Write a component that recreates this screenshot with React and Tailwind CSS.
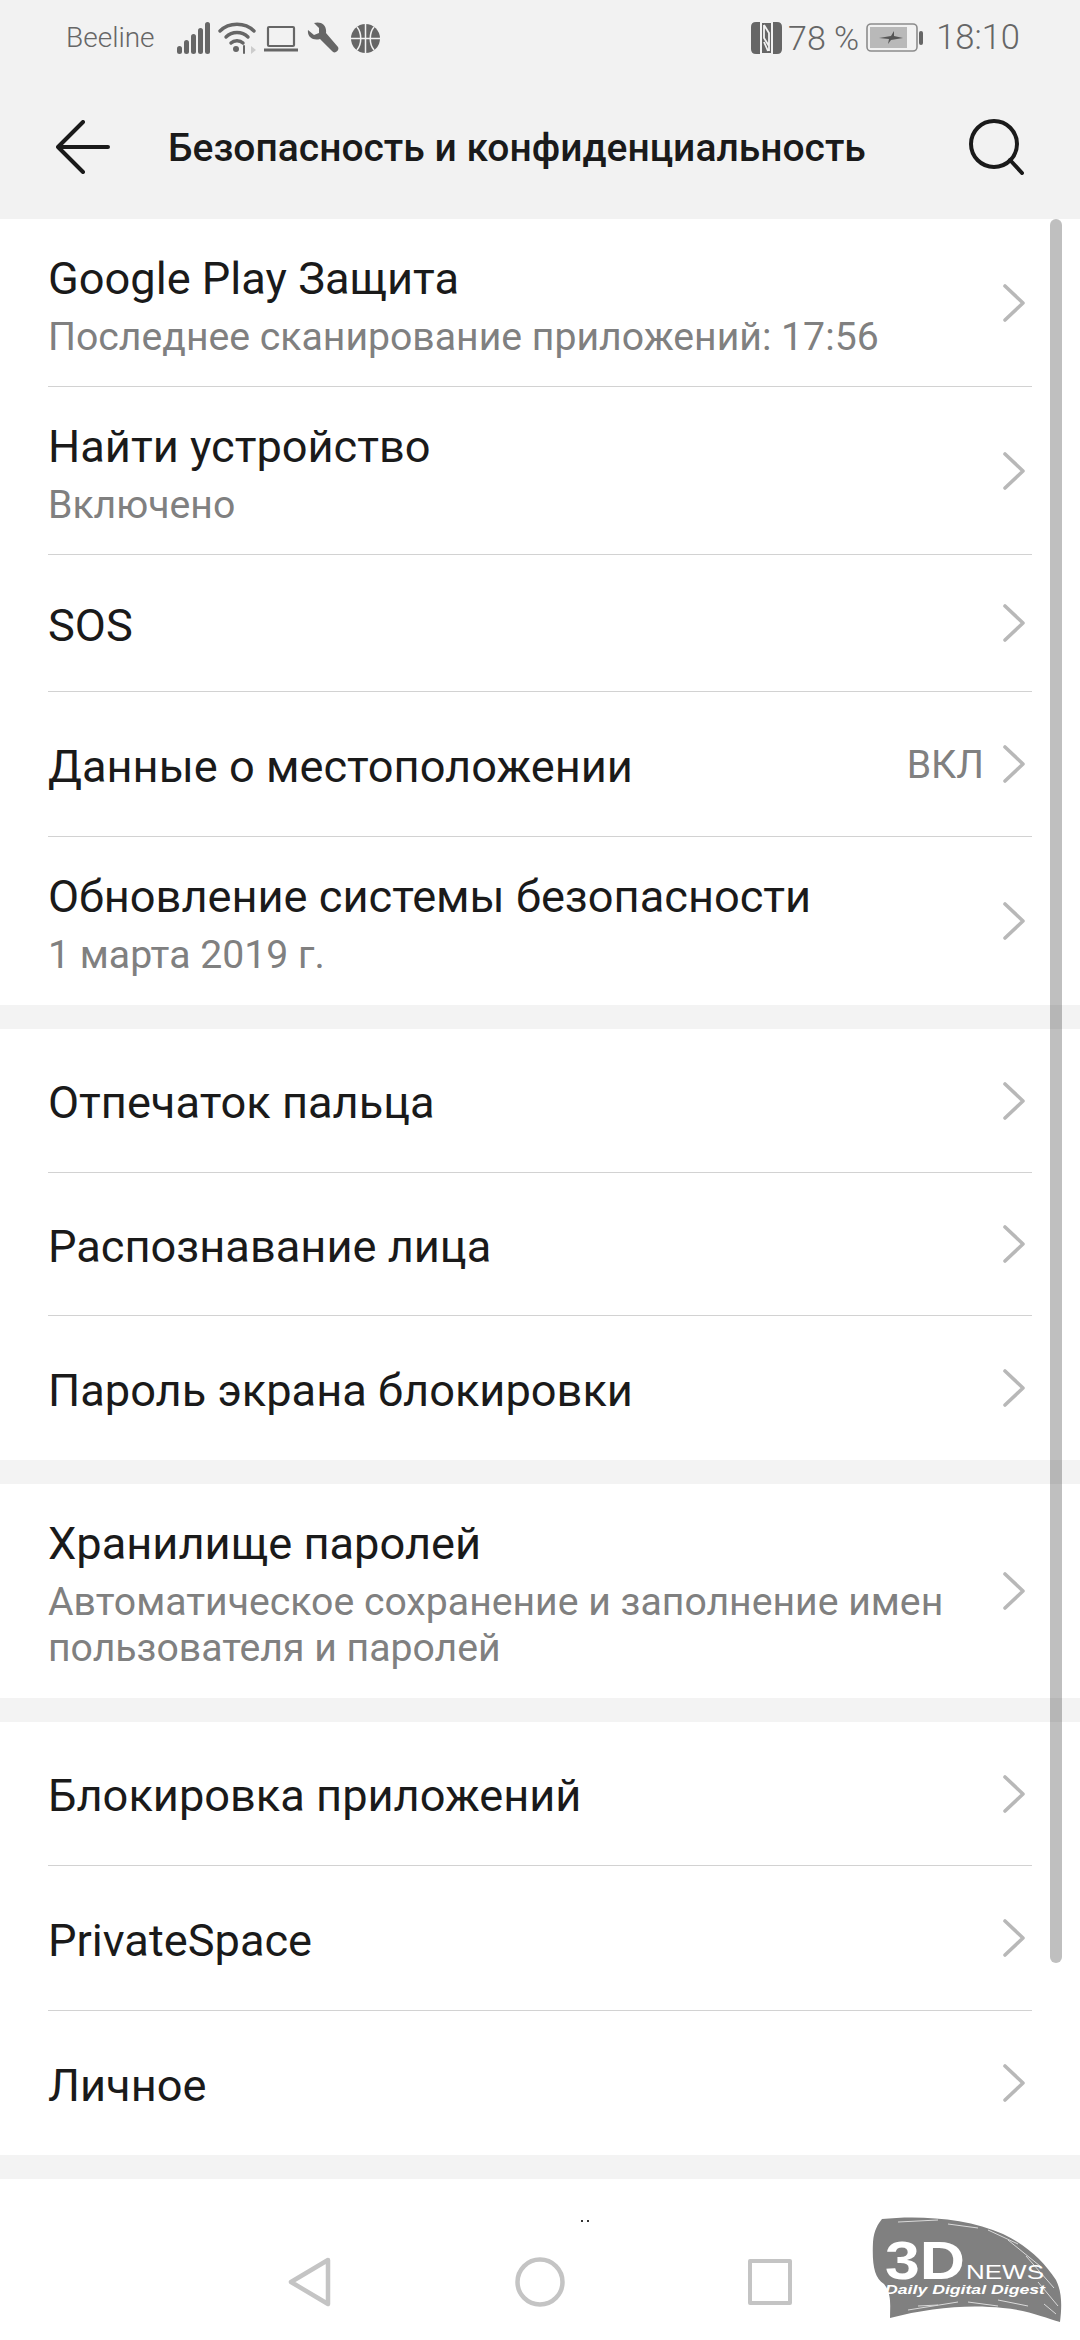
import React from 'react';

const sections = [
  [
    { title: 'Google Play Защита', sub: ['Последнее сканирование приложений: 17:56'], h: 'h-[168px]' },
    { title: 'Найти устройство', sub: ['Включено'], h: 'h-[168px]' },
    { title: 'SOS', h: 'h-[137px]' },
    { title: 'Данные о местоположении', value: 'ВКЛ', h: 'h-[145px]' },
    { title: 'Обновление системы безопасности', sub: ['1 марта 2019 г.'], h: 'h-[168px]' },
  ],
  [
    { title: 'Отпечаток пальца', h: 'h-[144px]' },
    { title: 'Распознавание лица', h: 'h-[143px]' },
    { title: 'Пароль экрана блокировки', h: 'h-[144px]' },
  ],
  [
    {
      title: 'Хранилище паролей',
      sub: ['Автоматическое сохранение и заполнение имен', 'пользователя и паролей'],
      h: 'h-[214px]',
    },
  ],
  [
    { title: 'Блокировка приложений', h: 'h-[144px]' },
    { title: 'PrivateSpace', h: 'h-[145px]' },
    { title: 'Личное', h: 'h-[144px]' },
  ],
];

const Chevron = () => (
  <svg width="24" height="40" viewBox="0 0 24 40" className="shrink-0 mr-[6px]" fill="none">
    <path d="M3 3 L21 20 L3 37" stroke="#b8b8b8" strokeWidth="3.6" strokeLinecap="round" strokeLinejoin="round" />
  </svg>
);

const Row = ({ item, last }) => (
  <div className={`${item.h} flex items-center ${last ? '' : 'border-b border-[#d2d2d2]'}`}>
    <div className="flex-1 min-w-0 pt-[5px]">
      <div className="text-[45.2px] leading-[56px] text-[#1a1a1a]">{item.title}</div>
      {item.sub && (
        <div className="mt-[7px]">
          {item.sub.map((line) => (
            <div key={line} className="text-[39.2px] leading-[46px] text-[#808080]">
              {line}
            </div>
          ))}
        </div>
      )}
    </div>
    {item.value && <span className="text-[39.2px] text-[#808080] mr-[18px] pt-[3px]">{item.value}</span>}
    <Chevron />
  </div>
);

const StatusBar = () => (
  <div className="h-[76px] flex items-center text-[#666666] pl-[66px] pr-[60px]">
    <span className="text-[28px] font-light w-[111px]">Beeline</span>
    <svg width="34" height="32" viewBox="0 0 34 32" className="shrink-0" fill="#666666">
      <rect x="0" y="24" width="5" height="8" rx="2.5" />
      <rect x="7" y="18" width="5" height="14" rx="2.5" />
      <rect x="14" y="12" width="5" height="20" rx="2.5" />
      <rect x="21" y="6" width="5" height="26" rx="2.5" />
      <rect x="28" y="0" width="5" height="32" rx="2.5" />
    </svg>
    <svg width="38" height="32" viewBox="0 0 38 32" className="ml-[7px] shrink-0" fill="none" stroke="#666666" strokeWidth="3.4" strokeLinecap="round">
      <path d="M2 9 C11 0 27 0 36 9" />
      <path d="M8 15 C14 9 24 9 30 15" />
      <path d="M13 21 C16 18 22 18 25 21" />
      <circle cx="18" cy="27" r="3" fill="#666666" stroke="none" />
      <path d="M26 24 L26 31" strokeWidth="2" />
      <path d="M33 24 L38 28 L33 32 Z" fill="#cccccc" stroke="none" />
    </svg>
    <svg width="34" height="30" viewBox="0 0 34 30" className="ml-[8px] shrink-0" fill="none" stroke="#666666">
      <rect x="4" y="4" width="26" height="19" strokeWidth="2.2" rx="1" />
      <path d="M0 27 H34" strokeWidth="3" strokeLinecap="round" />
    </svg>
    <svg width="32" height="32" viewBox="0 0 32 32" className="ml-[9px] shrink-0" fill="#666666">
      <path d="M1 8 L7 13 L12 11 L12 6 L7 1 C14 -1 20 3 19 11 L31 25 C32 27 31 29 29 30 C27 31 26 30 25 29 L13 17 C6 19 0 15 1 8 Z" />
    </svg>
    <svg width="29" height="29" viewBox="0 0 29 29" className="ml-[12px] shrink-0">
      <circle cx="14.5" cy="14.5" r="14.5" fill="#666666" />
      <path d="M14.5 0 V29 M0 14.5 H29 M6 3 C11 9 11 20 6 26 M23 3 C18 9 18 20 23 26" stroke="#f2f2f2" strokeWidth="1.5" fill="none" />
    </svg>
    <div className="flex-1" />
    <svg width="31" height="32" viewBox="0 0 31 32" className="shrink-0">
      <path d="M5 0 H9 V32 H5 Q0 32 0 27 V5 Q0 0 5 0 Z" fill="#666666" />
      <path d="M22 0 H26 Q31 0 31 5 V27 Q31 32 26 32 H22 Z" fill="#666666" />
      <path d="M11 1 H20 V31 H11 Z" fill="#666666" />
      <path d="M13 3 L18 11 V29 M13 3 V16 L18 24 M13 20 L17 29" stroke="#f2f2f2" strokeWidth="1.8" fill="none" />
      <path d="M10 0 V32 M21 0 V32" stroke="#f2f2f2" strokeWidth="1.4" />
    </svg>
    <span className="text-[34px] font-light ml-[6px] whitespace-nowrap">78 %</span>
    <svg width="58" height="30" viewBox="0 0 58 30" className="ml-[7px] shrink-0">
      <rect x="1" y="1" width="50" height="27" rx="4" fill="none" stroke="#8c8c8c" strokeWidth="1.6" />
      <rect x="4" y="4" width="37" height="21" fill="#b9b9b9" />
      <path d="M13 15 L25 13 L28 8 L28 13 L37 15 L25 17 L22 21 L23 16 Z" fill="#555555" />
      <rect x="53" y="8" width="4" height="14" rx="2" fill="#666666" />
    </svg>
    <span className="text-[34.5px] font-light ml-[12px]">18:10</span>
  </div>
);

const Header = () => (
  <div className="h-[143px] flex items-center pl-[56px] pr-[56px] pb-[2px]">
    <svg width="54" height="54" viewBox="0 0 54 54" className="shrink-0" fill="none" stroke="#1a1a1a" strokeWidth="4" strokeLinecap="round" strokeLinejoin="round">
      <path d="M27 2 L2 27 L27 52 M2 27 H52" />
    </svg>
    <div className="flex-1 ml-[58px] mt-[3px] text-[39px] font-medium text-[#1a1a1a] whitespace-nowrap">
      Безопасность и конфиденциальность
    </div>
    <svg width="55" height="56" viewBox="0 0 55 56" className="shrink-0" fill="none" stroke="#1a1a1a" strokeWidth="4" strokeLinecap="round">
      <circle cx="25" cy="25" r="23" />
      <path d="M41 41 L53 54" />
    </svg>
  </div>
);

const Watermark = () => (
  <svg width="200" height="112" viewBox="0 0 200 112" className="absolute left-[868px] top-[35px]">
    <path d="M14 5 C50 1 100 4 135 20 C160 32 176 48 188 66 C194 78 194 92 192 108 C178 104 160 96 135 94 C100 90 60 94 22 104 C22 92 24 80 16 70 C6 64 4 50 5 28 C6 16 10 10 14 5 Z" fill="#808080" />
    <g stroke="#ffffff" strokeWidth="1" opacity="0.7">
      <path d="M120 16 L150 30 M140 26 L172 52 M158 42 L186 74 M170 68 L190 92 M176 90 L188 100" />
      <path d="M40 96 L90 88 M50 92 L70 91 M100 88 L130 92 M130 86 L160 92" />
      <path d="M30 8 L70 6 M80 10 L110 14" />
    </g>
    <text x="17" y="65" fill="#ffffff" fontFamily="'Liberation Sans', sans-serif" fontWeight="700" fontSize="54" textLength="80" lengthAdjust="spacingAndGlyphs">3D</text>
    <text x="98" y="65" fill="#ffffff" fontFamily="'Liberation Sans', sans-serif" fontSize="20" textLength="78" lengthAdjust="spacingAndGlyphs">NEWS</text>
    <text x="17" y="80" fill="#ffffff" fontFamily="'Liberation Sans', sans-serif" fontStyle="italic" fontWeight="700" fontSize="13" textLength="160" lengthAdjust="spacingAndGlyphs">Daily Digital Digest</text>
  </svg>
);

const NavBar = () => (
  <div className="relative h-[161px] bg-white flex items-start pt-[78px] pl-[288px]">
    <span className="absolute left-[581px] top-[41px] w-[8px] h-[2px] border-x-2 border-[#333333]" />
    <svg width="44" height="50" viewBox="0 0 44 50" className="shrink-0" fill="none" stroke="#c4c4c4" strokeWidth="4.5" strokeLinejoin="round">
      <path d="M40 3 L3 25 L40 47 Z" />
    </svg>
    <svg width="50" height="50" viewBox="0 0 50 50" className="ml-[183px] shrink-0" fill="none" stroke="#c4c4c4" strokeWidth="4.5">
      <circle cx="25" cy="25" r="22.5" />
    </svg>
    <div className="ml-[183px] mt-[2px] w-[44px] h-[46px] border-[4.5px] border-[#c4c4c4] rounded-[2px]" />
    <Watermark />
  </div>
);

const App = () => (
  <div className="relative w-[1080px] h-[2340px] overflow-hidden bg-white font-['Roboto',sans-serif]">
    <div className="bg-[#f2f2f2]">
      <StatusBar />
      <Header />
    </div>
    {sections.map((rows, i) => (
      <div key={i} className="border-b-[24px] border-[#f3f3f3] px-[48px]">
        {rows.map((item, j) => (
          <Row key={item.title} item={item} last={j === rows.length - 1} />
        ))}
      </div>
    ))}
    <NavBar />
    {/* scrollbar */}
    <div className="absolute left-[1050px] top-[219px] w-[12px] h-[1744px] rounded-[6px] bg-[#000000]/25" />
  </div>
);

export default App;
